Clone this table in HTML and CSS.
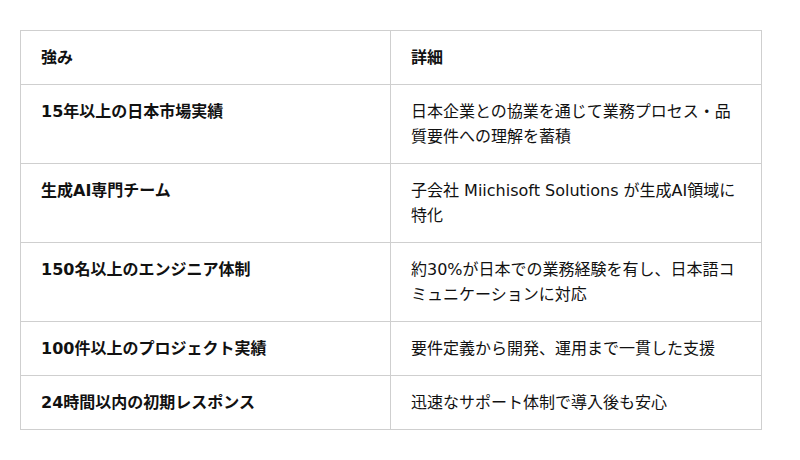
FILE: index.html
```html
<!DOCTYPE html>
<html lang="ja">
<head>
<meta charset="utf-8">
<link rel="stylesheet" href="styles.css">
</head>
<body>
<table class="strengths">
  <thead>
    <tr><th>強み</th><th>詳細</th></tr>
  </thead>
  <tbody>
    <tr><td class="name">15年以上の日本市場実績</td><td>日本企業との協業を通じて業務プロセス・品質要件への理解を蓄積</td></tr>
    <tr><td class="name">生成AI専門チーム</td><td>子会社 Miichisoft Solutions が生成AI領域に特化</td></tr>
    <tr><td class="name">150名以上のエンジニア体制</td><td>約30%が日本での業務経験を有し、日本語コミュニケーションに対応</td></tr>
    <tr><td class="name">100件以上のプロジェクト実績</td><td>要件定義から開発、運用まで一貫した支援</td></tr>
    <tr><td class="name">24時間以内の初期レスポンス</td><td>迅速なサポート体制で導入後も安心</td></tr>
  </tbody>
</table>
</body>
</html>
```
FILE: styles.css
```css
html, body {
  margin: 0;
  background: #fff;
}
body {
  padding: 30px 20px;
  font-family: "DejaVu Sans", "Noto Sans CJK JP", sans-serif;
  font-size: 16px;
  line-height: 25px;
  color: #111;
}
.strengths {
  width: 742px;
  border-collapse: collapse;
  table-layout: fixed;
}
.strengths th,
.strengths td {
  border: 1px solid #cfcfcf;
  padding: 14px 20px;
  text-align: left;
  vertical-align: top;
}
.strengths th:first-child,
.strengths td:first-child {
  width: 329px;
}
.strengths th {
  font-weight: bold;
}
.strengths td {
  font-weight: normal;
}
.strengths td.name {
  font-weight: bold;
}
```
